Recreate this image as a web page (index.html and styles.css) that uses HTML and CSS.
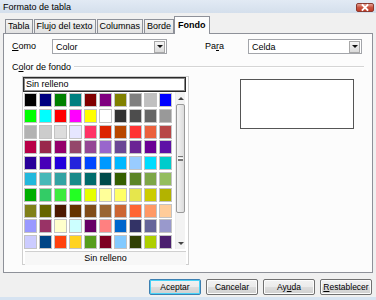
FILE: index.html
```html
<!DOCTYPE html>
<html lang="es">
<head>
    <meta charset="utf-8">
    <title>Formato de tabla</title>
    <link rel="stylesheet" href="styles.css">
</head>
<body>
    <div class="window">
        <div class="titlebar">
            <span class="title">Formato de tabla</span>
            <div class="close">
                <svg width="18" height="9" viewBox="0 0 18 9">
                    <path d="M6.5 2 L11.5 7 M11.5 2 L6.5 7" stroke="#fff" stroke-width="1.8" stroke-linecap="square"/>
                </svg>
            </div>
        </div>
        <div class="tabs">
            <div class="tab">Tabla</div>
            <div class="tab">Flujo del texto</div>
            <div class="tab">Columnas</div>
            <div class="tab">Borde</div>
            <div class="tab active">Fondo</div>
        </div>
        <div class="panel">
            <div class="row">
                <span class="label"><u>C</u>omo</span>
                <div class="select">
                    <span>Color</span>
                    <div class="drop"></div>
                </div>
                <span></span>
                <span class="label">Pa<u>r</u>a</span>
                <div class="select">
                    <span>Celda</span>
                    <div class="drop"></div>
                </div>
            </div>
            <div class="section">
                <span>C<u>o</u>lor de fondo</span>
                <div class="rule"></div>
            </div>
            <div class="content">
                <div class="colorbox">
                    <div class="search">Sin relleno</div>
                    <div class="palette">
                        <div class="swatches" id="swatches"></div>
                        <div class="scroll">
                            <div class="arrow up"></div>
                            <div class="thumb"><div class="grip"></div></div>
                            <div class="arrow down"></div>
                        </div>
                    </div>
                    <div class="foot">Sin relleno</div>
                </div>
                <div class="preview"></div>
            </div>
        </div>
        <div class="buttons">
            <button class="btn default">Aceptar</button>
            <button class="btn">Cancelar</button>
            <button class="btn">Ay<u>u</u>da</button>
            <button class="btn"><u>R</u>establecer</button>
        </div>
    </div>
    <script>
        const palette = [
            '#000000', '#000080', '#008000', '#008080', '#800000', '#800080', '#808000', '#808080', '#c0c0c0', '#0000ff',
            '#00ff00', '#00ffff', '#ff0000', '#ff00ff', '#ffff00', '#ffffff', '#333333', '#4d4d4d', '#666666', '#999999',
            '#b3b3b3', '#cccccc', '#dddddd', '#e6e6ff', '#ff3366', '#dc2300', '#b84700', '#ff3333', '#eb613d', '#b84747',
            '#b80047', '#99284c', '#94006b', '#94476b', '#944794', '#9966cc', '#6b4794', '#6b2394', '#6b0094', '#5e11a6',
            '#280099', '#4700b8', '#2300dc', '#2323dc', '#0047ff', '#0099ff', '#00b8ff', '#99ccff', '#00dcff', '#00cccc',
            '#23b8dc', '#47b8b8', '#33a3a3', '#198a8a', '#006b6b', '#004a4a', '#355e00', '#5c8526', '#7da647', '#94bd5e',
            '#00ae00', '#33cc66', '#3deb3d', '#23ff23', '#e6ff00', '#ffff99', '#ffff66', '#e6e64c', '#cccc00', '#b3b300',
            '#808019', '#666600', '#4c1900', '#663300', '#804c19', '#996633', '#cc6633', '#ff6633', '#ff9966', '#ffcc99',
            '#9999ff', '#993366', '#ffffcc', '#ccffff', '#660066', '#ff8080', '#0066cc', '#333366', '#666699', '#9999cc',
            '#ccccff', '#004586', '#ff420e', '#ffd320', '#579d1c', '#7e0021', '#83caff', '#314004', '#aecf00', '#4b1f6f'
        ];

        const grid = document.getElementById('swatches');
        palette.forEach(function (color) {
            const cell = document.createElement('div');
            cell.className = 'swatch';
            cell.style.background = color;
            grid.appendChild(cell);
        });
    </script>
</body>
</html>
```

FILE: styles.css
```css
* {
    box-sizing: border-box;
}

body {
    margin: 0;
    background-color: #f0f0f0;
    font-family: 'Liberation Sans', Arial, sans-serif;
    font-size: 9px;
    color: #000;
}

.window {
    width: 376px;
    height: 300px;
    border-bottom: 3px solid #d6e3f1;
}

.titlebar {
    height: 13px;
    display: flex;
    justify-content: space-between;
    align-items: flex-start;
    padding: 0 2px 0 3px;
    background: linear-gradient(#e2eaf4, #d4dfec);
}

.title {
    line-height: 15px;
}

.close {
    width: 18px;
    height: 9px;
    margin-top: 3px;
    border: 1px solid #8a3a30;
    border-radius: 2px;
    background: linear-gradient(#e3a295, #c9533f 50%, #c23d28);
    display: flex;
    align-items: center;
    justify-content: center;
}

.close svg {
    display: block;
    margin: -1px;
}

.tabs {
    height: 20px;
    display: flex;
    align-items: flex-end;
    padding-left: 5px;
}

.tab {
    height: 14px;
    line-height: 12px;
    padding: 0 2px;
    margin-right: 1px;
    border: 1px solid #8e9199;
    border-bottom: none;
    background: linear-gradient(#f4f4f4, #e2e2e2);
}

.tab.active {
    height: 18px;
    line-height: 16px;
    margin-left: -1px;
    margin-bottom: -1px;
    padding: 0 3px;
    font-weight: 700;
    background-color: #fcfcfc;
    background-image: none;
    position: relative;
}

.panel {
    height: 240px;
    margin: 0 3px;
    padding: 5px 8px 0 8px;
    border: 1px solid #8e9199;
    background-color: #fcfcfc;
}

.row {
    display: grid;
    grid-template-columns: 40px 115px 38px 43px 114px;
    height: 15px;
    align-items: center;
}

.label {
    line-height: 15px;
}

.select {
    height: 15px;
    display: flex;
    align-items: center;
    justify-content: space-between;
    padding: 0 1px 0 3px;
    border: 1px solid #a3a5aa;
    background-color: #fff;
}

.drop {
    width: 11px;
    height: 12px;
    border: 1px solid #a8a8a8;
    background: linear-gradient(#f6f6f6, #dadada);
    display: flex;
    align-items: center;
    justify-content: center;
}

.drop::after {
    content: '';
    border-left: 3px solid transparent;
    border-right: 3px solid transparent;
    border-top: 3px solid #111;
}

.section {
    height: 12px;
    margin-top: 7px;
    display: flex;
    align-items: center;
}

.section span {
    line-height: 12px;
}

.rule {
    flex: 1;
    height: 2px;
    margin: 0 0 0 3px;
    border-top: 1px solid #d5d5d5;
    border-bottom: 1px solid #fff;
}

.content {
    display: flex;
    align-items: flex-start;
    margin-top: 3px;
}

.colorbox {
    width: 167px;
    height: 189px;
    margin-left: 10px;
    border: 1px solid #cfcfcf;
    background-color: #fff;
}

.search {
    width: 163px;
    height: 15px;
    line-height: 12px;
    padding-left: 2px;
    border: 1px solid #2a2a2a;
    box-shadow: inset 0 0 0 1px #8a8a8a;
}

.palette {
    display: flex;
    height: 157px;
}

.swatches {
    display: grid;
    grid-template-columns: repeat(10, 13px);
    grid-auto-rows: 14px;
    column-gap: 2px;
    row-gap: 1.8px;
    margin: 1px 0 0 1px;
}

.swatch {
    border: 1px solid #c3c3c3;
}

.scroll {
    width: 10px;
    height: 157px;
    margin-left: 3px;
    display: flex;
    flex-direction: column;
    align-items: center;
    background-color: #f3f3f3;
    border-left: 1px solid #ececec;
}

.arrow {
    height: 12px;
    display: flex;
    align-items: center;
}

.arrow.up::after {
    content: '';
    border-left: 3px solid transparent;
    border-right: 3px solid transparent;
    border-bottom: 3px solid #444;
}

.arrow.down {
    margin-top: auto;
}

.arrow.down::after {
    content: '';
    border-left: 3px solid transparent;
    border-right: 3px solid transparent;
    border-top: 3px solid #444;
}

.thumb {
    width: 9px;
    height: 109px;
    border: 1px solid #9a9a9a;
    border-radius: 2px;
    background: linear-gradient(90deg, #f4f4f4, #dcdcdc);
    display: flex;
    align-items: center;
    justify-content: center;
}

.grip {
    width: 5px;
    height: 5px;
    border-top: 1px solid #777;
    border-bottom: 1px solid #777;
    background: linear-gradient(#fff 1px, #777 1px, #777 2px, #fff 2px);
    background-size: 100% 3px;
    background-position: 0 1px;
    background-repeat: no-repeat;
}

.foot {
    height: 14px;
    margin: 2px 2px 0 2px;
    border-top: 1px solid #d0d0d0;
    text-align: center;
    line-height: 13px;
    background-color: #f7f7f7;
}

.preview {
    width: 114px;
    height: 50px;
    margin: 3px 0 0 51px;
    border: 1px solid #555;
    background-color: #fff;
}

.buttons {
    display: flex;
    justify-content: flex-end;
    gap: 5px;
    padding: 6px 4px 0 0;
}

.btn {
    width: 52px;
    height: 16px;
    padding: 0;
    font-family: inherit;
    font-size: 8.5px;
    color: #000;
    border: 1px solid #707070;
    border-radius: 2px;
    background: linear-gradient(#f2f2f2, #ebebeb 50%, #dddddd 50%, #cfcfcf);
    box-shadow: inset 0 0 0 1px #fcfcfc;
}

.btn.default {
    border-color: #3c7fb1;
    box-shadow: inset 0 0 0 1px #48d3f8;
}
```
